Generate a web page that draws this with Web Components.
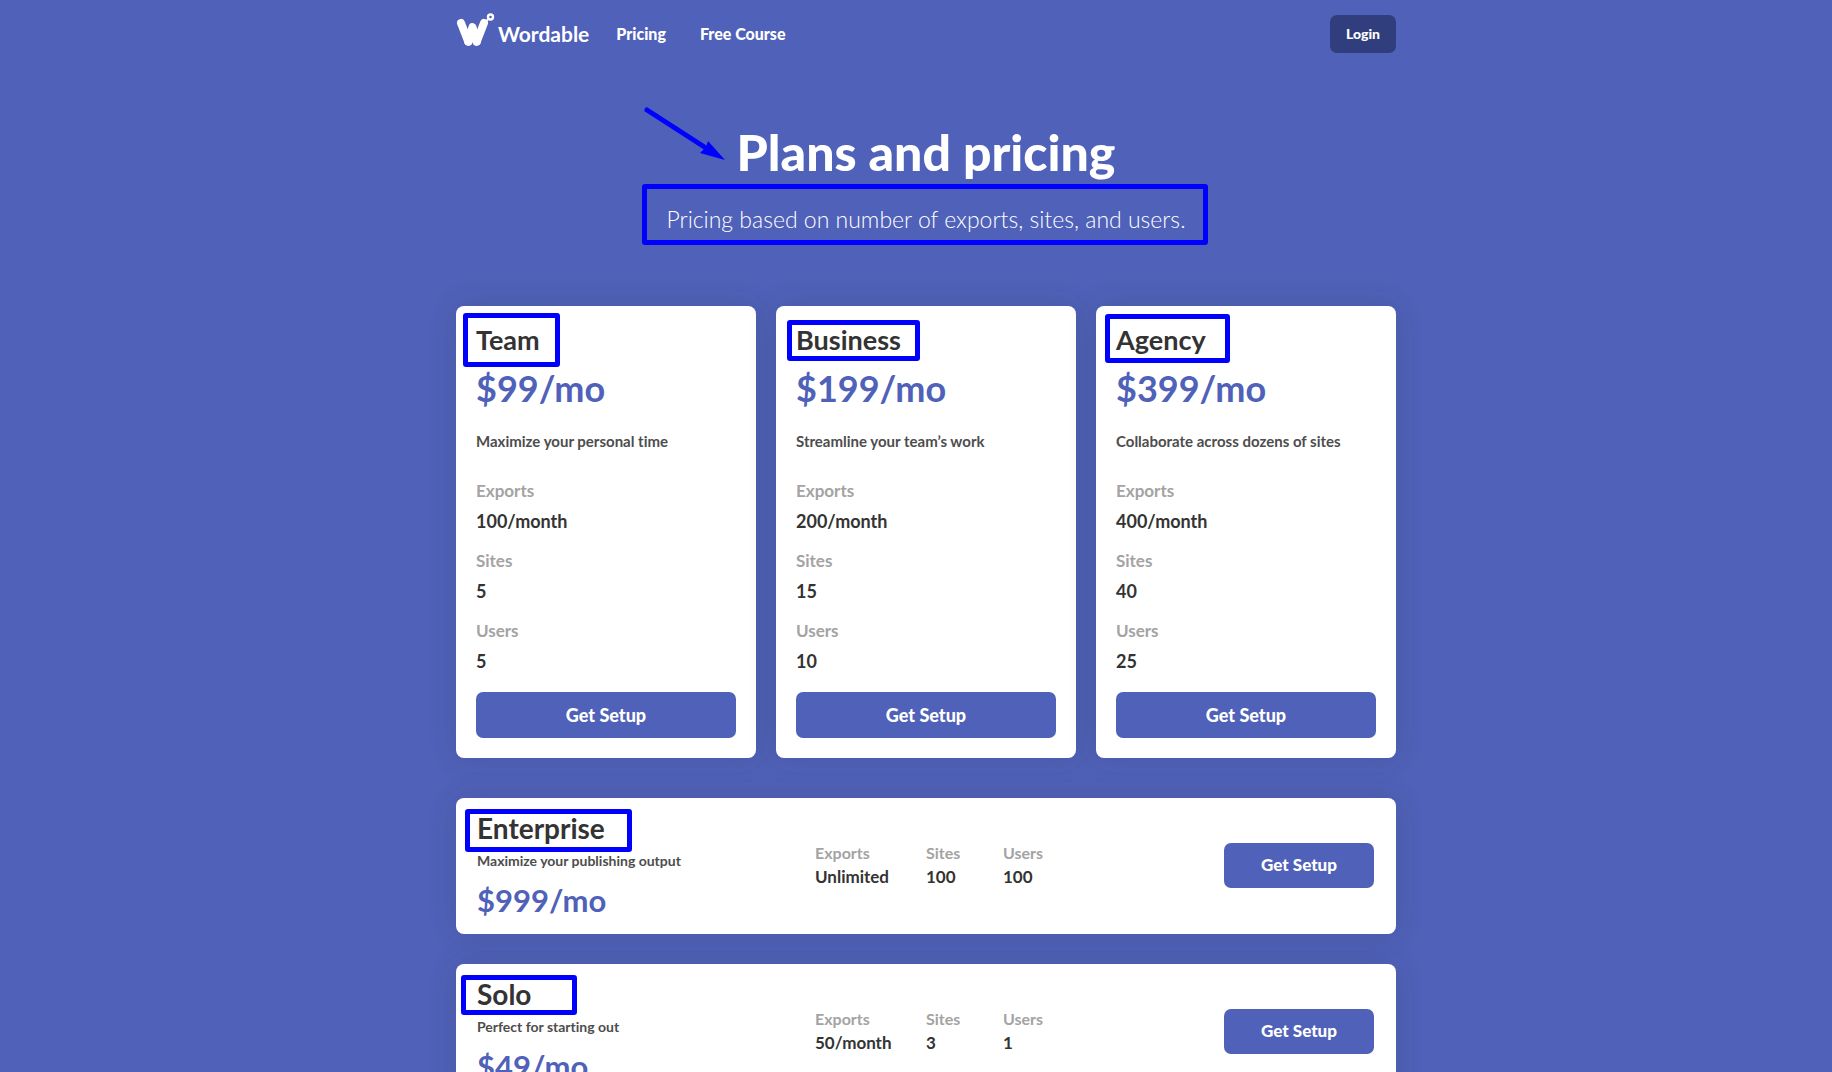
<!DOCTYPE html>
<html lang="en">
<head>
<meta charset="utf-8">
<meta name="viewport" content="width=device-width, initial-scale=1">
<title>Plans and pricing – Wordable</title>
<style>
  html { background: #4f61b8; }
  body { margin: 0; padding: 0 0 40px 20px; font-family: Lato, "Open Sans", sans-serif; font-variant-ligatures: none; color: #333; }
  main { max-width: 940px; margin: 0 auto; }
  .plans { display: grid; grid-template-columns: repeat(3, minmax(0, 1fr)); gap: 20px; margin-bottom: 40px; }
  .rows { display: flex; flex-direction: column; gap: 30px; }
</style>
</head>
<body>
<main>
  <site-header></site-header>
  <page-hero></page-hero>
  <section class="plans">
    <plan-card name="Team" price="$99/mo" exports="100/month" sites="5" users="5" style="--x:7px;--y:7px;--w:97px;--h:54px">Maximize your personal time</plan-card>
    <plan-card name="Business" price="$199/mo" exports="200/month" sites="15" users="10" style="--x:11px;--y:14px;--w:133px;--h:41px">Streamline your team’s work</plan-card>
    <plan-card name="Agency" price="$399/mo" exports="400/month" sites="40" users="25" style="--x:9px;--y:8px;--w:125px;--h:49px">Collaborate across dozens of sites</plan-card>
  </section>
  <section class="rows">
    <plan-row name="Enterprise" price="$999/mo" exports="Unlimited" sites="100" users="100" style="--x:9px;--y:11px;--w:167px;--h:43px">Maximize your publishing output</plan-row>
    <plan-row name="Solo" price="$49/mo" exports="50/month" sites="3" users="1" style="--x:5px;--y:11px;--w:116px;--h:40px">Perfect for starting out</plan-row>
  </section>
</main>
<script>
class BaseElement extends HTMLElement {
  connectedCallback() {
    if (this.shadowRoot) return;
    this.attachShadow({ mode: 'open' }).innerHTML = this.render();
  }
  attr(name) { return this.getAttribute(name) || ''; }
}

// Outline that highlights a region of its positioned ancestor.
customElements.define('note-box', class extends BaseElement {
  render() {
    return `<style>
      :host { position: absolute; left: var(--x); top: var(--y); width: var(--w); height: var(--h);
        box-sizing: border-box; border: 5px solid #00f; border-radius: 3px; pointer-events: none; }
    </style>`;
  }
});

customElements.define('action-button', class extends BaseElement {
  render() {
    return `<style>
      :host { display: block; }
      button { display: block; width: 100%; height: var(--button-height, 46px); padding: 0 16px; border: 0; border-radius: 7px;
        background: var(--button-fill, #4f61b8); color: #fff; font: 900 var(--button-size, 18px)/20px Lato, sans-serif; cursor: pointer; }
    </style><button type="button"><slot></slot></button>`;
  }
});

customElements.define('site-header', class extends BaseElement {
  render() {
    return `<style>
      :host { display: flex; align-items: center; height: 68px; }
      a { color: #fff; text-decoration: none; font-weight: 900; font-size: 16px; line-height: 20px; }
      .brand { display: flex; align-items: center; gap: 3px; font-size: 21px; font-weight: 700; }
      svg { display: block; width: 39px; height: 36px; margin-bottom: 6px; }
      nav { display: flex; gap: 34px; margin-left: 27px; }
      action-button { margin-left: auto; --button-height: 38px; --button-fill: #313e7e; --button-size: 14px; }
    </style>
    <a class="brand" href="#">
      <svg viewBox="0 0 39 36" fill="none" stroke="#fff" stroke-linecap="round" stroke-linejoin="round" aria-hidden="true">
        <path d="M5 10 L12.300 28.700 M28 10 L20.700 28.700" stroke-width="8"/>
        <path d="M12.300 28.700 L16.500 14 L20.700 28.700" stroke-width="8"/>
        <path d="M28 10 L32 6.500" stroke-width="2"/>
        <circle cx="34.500" cy="4" r="2.500" stroke-width="2.400"/>
      </svg><span>Wordable</span></a>
    <nav><a href="#">Pricing</a><a href="#">Free Course</a></nav>
    <action-button>Login</action-button>`;
  }
});

customElements.define('page-hero', class extends BaseElement {
  render() {
    return `<style>
      :host { display: block; position: relative; padding: 52px 0 60px; text-align: center; color: #fff; }
      h1 { margin: 0; font-size: 50px; line-height: 64px; font-weight: 900; }
      p { margin: 0; padding: 23px 0 15px; font-size: 23px; line-height: 24px; font-weight: 300; }
      note-box { --x: calc(50% - 284px); --y: 116px; --w: 566px; --h: 61px; }
      svg { position: absolute; left: calc(50% - 284px); top: 36px; width: 90px; height: 60px; }
    </style>
    <h1>Plans and pricing</h1>
    <p>Pricing based on number of exports, sites, and users.</p>
    <note-box></note-box>
    <svg viewBox="0 0 90 60" aria-hidden="true">
      <path d="M5 6 L64 44" stroke="#00f" stroke-width="5" stroke-linecap="round"/>
      <path d="M83 56 L66 37 L64 43 L58 49 Z" fill="#00f"/>
    </svg>`;
  }
});

const statList = el => `<dl>
  <div><dt>Exports</dt><dd>${el.attr('exports')}</dd></div>
  <div><dt>Sites</dt><dd>${el.attr('sites')}</dd></div>
  <div><dt>Users</dt><dd>${el.attr('users')}</dd></div>
</dl>`;

const cardStyle = `
  :host { position: relative; box-sizing: border-box; background: #fff; border-radius: 8px; box-shadow: 0 0 30px rgba(51, 51, 51, .14); }
  h2 { margin: 0; font-size: 28px; font-weight: 700; }
  p, dl, dd { margin: 0; }
  p { color: #4d4d4d; font-weight: 700; }
  .price { color: #4f61b8; font-weight: 700; }
  dl { font-weight: 700; }
  dt { color: #a3a3a3; }
`;

customElements.define('plan-card', class extends BaseElement {
  render() {
    return `<style>${cardStyle}
      :host { display: flex; flex-direction: column; padding: 14px 20px 20px; }
      h2 { font-size: 27px; line-height: 40px; }
      .price { font-size: 36px; line-height: 56px; }
      .desc { font-size: 15px; line-height: 20px; margin: 15px 0 25px; }
      dl { display: flex; flex-direction: column; gap: 10px; font-size: 17px; line-height: 30px; margin-bottom: 16px; }
      dd { font-size: 18px; }
    </style>
    <h2>${this.attr('name')}</h2>
    <p class="price">${this.attr('price')}</p>
    <p class="desc"><slot></slot></p>
    ${statList(this)}
    <action-button>Get Setup</action-button>
    <note-box></note-box>`;
  }
});

customElements.define('plan-row', class extends BaseElement {
  render() {
    return `<style>${cardStyle}
      :host { display: grid; grid-template-columns: 338px 1fr 150px; align-items: center; padding: 10px 22px 8px 21px; }
      h2 { line-height: 40px; }
      .desc { font-size: 14px; line-height: 26px; }
      .price { font-size: 31px; line-height: 52px; }
      dl { display: flex; font-size: 16px; line-height: 24px; }
      dd { font-size: 17px; }
      dl div { min-width: 77px; }
      dl div:first-child { min-width: 111px; }
      dl, action-button { margin-bottom: 4px; }
      action-button { --button-height: 45px; --button-size: 17px; }
    </style>
    <div><h2>${this.attr('name')}</h2>
    <p class="desc"><slot></slot></p>
    <p class="price">${this.attr('price')}</p></div>
    ${statList(this)}
    <action-button>Get Setup</action-button>
    <note-box></note-box>`;
  }
});
</script>
</body>
</html>
